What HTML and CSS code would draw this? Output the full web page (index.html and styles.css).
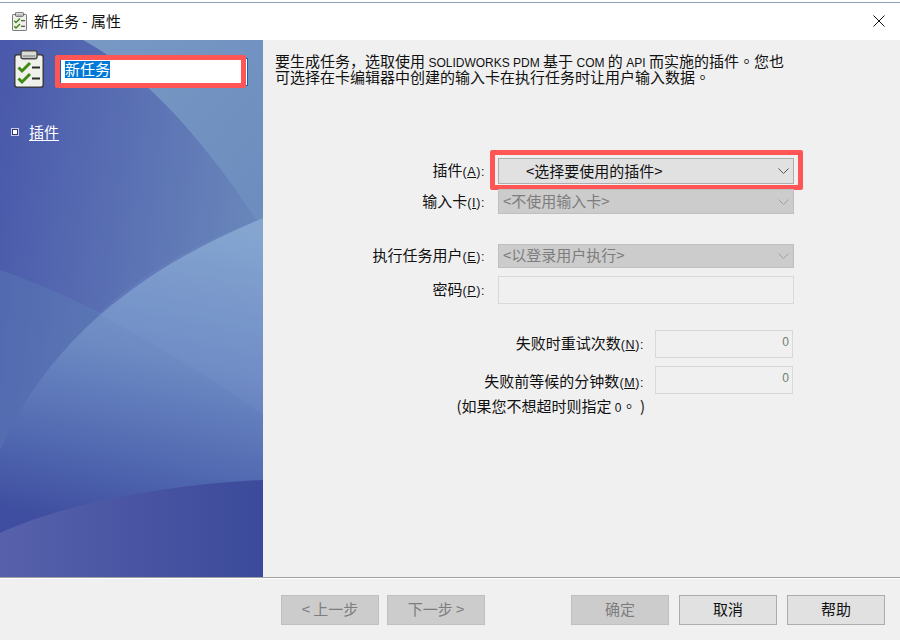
FILE: index.html
```html
<!DOCTYPE html>
<html lang="zh-CN">
<head>
<meta charset="utf-8">
<title>新任务 - 属性</title>
<link rel="stylesheet" href="styles.css">
</head>
<body>
<svg class="defs" width="0" height="0" aria-hidden="true">
  <defs>
    <symbol id="clip" viewBox="0 0 30 38">
      <rect x="0.75" y="4.75" width="28.5" height="32.5" rx="2.5" fill="#f1f1ec" stroke="#3c3c44" stroke-width="1.5"/>
      <rect x="7" y="0.75" width="16" height="8" rx="2" fill="#dcdcd8" stroke="#4a4a50" stroke-width="1.5"/>
      <rect x="8.5" y="5" width="13" height="2.5" fill="#a8a8a4"/>
      <path d="M4.5 17.5l3.5 3.5 8-8" fill="none" stroke="#3f8a12" stroke-width="3"/>
      <path d="M4.5 28.5l3.5 3.5 8-8" fill="none" stroke="#3f8a12" stroke-width="3"/>
      <path d="M18 17.5h8M18 28.5h8" fill="none" stroke="#2d2d2d" stroke-width="2.2"/>
    </symbol>
  </defs>
</svg>
<div class="window">
  <div class="desk-strip"></div>
  <header class="titlebar">
    <svg class="title-icon"><use href="#clip"/></svg>
    <span class="title-text">新任务 - 属性</span>
    <svg class="close" viewBox="0 0 12 12"><path d="M0.5 0.5l11 11M11.5 0.5l-11 11" stroke="#111" stroke-width="1" fill="none"/></svg>
  </header>
  <div class="content">
    <aside class="sidebar">
      <svg class="art" viewBox="0 0 263 537" preserveAspectRatio="none" aria-hidden="true">
        <defs>
          <linearGradient id="base" x1="0" y1="0.1" x2="1" y2="0.35">
            <stop offset="0" stop-color="#4a59ab"/>
            <stop offset="1" stop-color="#6a88bb"/>
          </linearGradient>
          <linearGradient id="arc" x1="0.75" y1="0" x2="0.6" y2="1">
            <stop offset="0" stop-color="#84a6cf"/>
            <stop offset="0.4" stop-color="#6d8ac3"/>
            <stop offset="0.7" stop-color="#5068b0"/>
            <stop offset="0.9" stop-color="#3f4ea0"/>
            <stop offset="1" stop-color="#3e4d9f"/>
          </linearGradient>
          <linearGradient id="low" x1="0" y1="0.6" x2="1" y2="0.6">
            <stop offset="0" stop-color="#5761ab"/>
            <stop offset="1" stop-color="#3c4a9b"/>
          </linearGradient>
          <linearGradient id="corner" x1="0" y1="0" x2="1" y2="1">
            <stop offset="0" stop-color="#7899c4"/>
            <stop offset="1" stop-color="#6c8cbe"/>
          </linearGradient>
        </defs>
        <rect width="263" height="537" fill="url(#base)"/>
        <path d="M83 0C135 28 195 85 263 190V0Z" fill="url(#corner)"/>
        <path d="M0 230C90 260 190 320 263 375V537H0Z" fill="#5f88b8" fill-opacity="0.3"/>
        <path d="M0 410C45 310 125 235 263 178V537H0Z" fill="url(#arc)"/>
        <path d="M98 274C170 312 220 345 263 375V178C190 205 140 235 98 274Z" fill="#8fa8e0" fill-opacity="0.12"/>
        <path d="M0 493C60 465 160 445 263 440V537H0Z" fill="url(#low)"/>
      </svg>
      <div class="side-head">
        <svg class="big-icon"><use href="#clip"/></svg>
        <div class="name-box"><span class="selected">新任务</span></div>
      </div>
      <nav class="side-nav">
        <span class="bullet"></span>
        <a class="side-link">插件</a>
      </nav>
    </aside>
    <main class="panel">
      <p class="intro">要生成任务，选取使用 <span class="latin">SOLIDWORKS PDM</span> 基于 <span class="latin">COM</span> 的 <span class="latin">API</span> 而实施的插件<span class="stop" lang="zh-TW">。</span>您也<br>可选择在卡编辑器中创建的输入卡在执行任务时让用户输入数据<span class="stop" lang="zh-TW">。</span></p>
      <div class="form">
        <div class="row row-plugin">
          <label class="label">插件<span class="key">(<u>A</u>):</span></label>
          <div class="combo combo-active">&lt;选择要使用的插件&gt;
            <svg class="chev" viewBox="0 0 11 6"><path d="M0.5 0.5l5 5 5-5" fill="none" stroke="#555" stroke-width="1"/></svg>
          </div>
        </div>
        <div class="row row-card">
          <label class="label">输入卡<span class="key">(<u>I</u>):</span></label>
          <div class="combo combo-off">&lt;不使用输入卡&gt;
            <svg class="chev" viewBox="0 0 11 6"><path d="M0.5 0.5l5 5 5-5" fill="none" stroke="#a0a0a0" stroke-width="1"/></svg>
          </div>
        </div>
        <div class="row row-user">
          <label class="label">执行任务用户<span class="key">(<u>E</u>):</span></label>
          <div class="combo combo-off">&lt;以登录用户执行&gt;
            <svg class="chev" viewBox="0 0 11 6"><path d="M0.5 0.5l5 5 5-5" fill="none" stroke="#a0a0a0" stroke-width="1"/></svg>
          </div>
        </div>
        <div class="row row-pass">
          <label class="label">密码<span class="key">(<u>P</u>):</span></label>
          <div class="field field-wide"></div>
        </div>
        <div class="row row-num row-retry">
          <label class="label">失败时重试次数<span class="key">(<u>N</u>):</span></label>
          <div class="field field-num">0</div>
        </div>
        <div class="row row-num row-wait">
          <label class="label">失败前等候的分钟数<span class="key">(<u>M</u>):</span></label>
          <div class="field field-num">0</div>
        </div>
        <div class="note">(如果您不想超时则指定 <span class="zero">0</span><span class="stop" lang="zh-TW">。</span> )</div>
      </div>
    </main>
  </div>
  <footer class="footer">
    <button class="btn btn-off" disabled>&lt; 上一步</button>
    <button class="btn btn-off" disabled>下一步 &gt;</button>
    <button class="btn btn-off btn-ok" disabled>确定</button>
    <button class="btn btn-cancel">取消</button>
    <button class="btn">帮助</button>
  </footer>
</div>
</body>
</html>
```
FILE: styles.css
```css
*, *::before, *::after { box-sizing: border-box; }
html, body { margin: 0; padding: 0; }
body {
  width: 900px;
  height: 640px;
  overflow: hidden;
  background: #f0f0f0;
  font-family: "Noto Sans CJK SC", "Liberation Sans", sans-serif;
  font-size: 15px;
  line-height: 16px;
  color: #111;
}
.defs { position: absolute; }
.window { width: 900px; height: 640px; display: flex; flex-direction: column; }
.desk-strip { height: 3px; background: #fff; border-bottom: 1px solid #8f9cb8; }
.titlebar {
  height: 37px;
  background: #fff;
  display: flex;
  align-items: center;
  padding: 0 15px 1px 12px;
}
.title-icon { width: 15px; height: 19px; }
.title-text { margin-left: 7px; font-size: 15px; flex: 1; }
.close { width: 12px; height: 12px; }

.content { height: 537px; display: flex; }
.sidebar { width: 263px; position: relative; color: #fff; }
.art { position: absolute; left: 0; top: 0; width: 263px; height: 537px; }
.side-head { position: relative; display: flex; align-items: flex-start; padding: 10px 0 0 14px; }
.big-icon { width: 30px; height: 38px; }
.name-box {
  position: relative;
  margin: 8px 0 0 16px;
  width: 188px;
  height: 28px;
  background: #fff;
  border: 1px solid #0a68c4;
  padding: 2px 0 0 4px;
}
.name-box::after {
  content: "";
  position: absolute;
  left: -6px;
  top: -4px;
  width: 191px;
  height: 33px;
  border: 5px solid #ff5555;
  border-radius: 2px;
}
.selected { display: inline-block; background: #0078d7; color: #fff; height: 17px; line-height: 16px; font-size: 15px; }
.side-nav { position: relative; display: flex; align-items: center; margin: 36px 0 0 12px; }
.bullet { width: 6px; height: 6px; background: #fff; border: 1px solid #30356e; outline: 1px solid #c6cbe8; outline-offset: 0; }
.side-link { margin-left: 11px; color: #fff; text-decoration: underline; text-underline-offset: 2px; font-size: 15px; }

.panel { flex: 1; padding: 13px 106px 0 12px; background: #f0f0f0; }
.intro { margin: 0; font-size: 15px; line-height: 16px; white-space: nowrap; }
.latin { font-family: "Liberation Sans", sans-serif; font-size: 12px; line-height: 0; }
.stop { font-family: "Noto Sans CJK TC", sans-serif; line-height: 0; }
.form { margin-top: 73px; display: flex; flex-direction: column; align-items: stretch; }
.row { display: flex; justify-content: flex-end; align-items: center; gap: 13px; }
.label { white-space: nowrap; font-size: 15px; padding-bottom: 2px; }
.key { font-family: "Liberation Sans", sans-serif; font-size: 12.5px; letter-spacing: 0.6px; line-height: 0; }
.combo {
  width: 296px;
  position: relative;
  display: flex;
  align-items: center;
  padding-left: 4px;
  font-size: 15px;
  border: 1px solid;
}
.combo-active { height: 26px; padding-left: 27px; background: #e1e1e1; border-color: #adadad; color: #111; }
.combo-active::after {
  content: "";
  position: absolute;
  left: -9px;
  top: -9px;
  width: 313px;
  height: 40px;
  border: 5px solid #ff5555;
  border-radius: 2px;
}
.combo-off { background: #cccccc; border-color: #bfbfbf; color: #7d7d7d; padding-bottom: 2px; }
.chev { position: absolute; right: 4px; top: 50%; margin-top: -3px; width: 11px; height: 6px; }
.row-plugin { height: 26px; }
.row-card { margin-top: 5px; height: 25px; }
.row-card .combo { height: 25px; }
.row-user { margin-top: 30px; height: 24px; }
.row-user .combo { height: 24px; }
.row-pass { margin-top: 8px; height: 28px; }
.field { height: 28px; background: #f0f0f0; border: 1px solid #d9d9d9; }
.field-wide { width: 296px; }
.row-num { height: 28px; gap: 11px; padding-right: 1px; }
.row-retry { margin-top: 26px; }
.row-wait { margin-top: 8px; }
.row-wait .label { position: relative; top: 2px; }
.field-num {
  width: 138px;
  text-align: right;
  padding: 3px 3px 0 0;
  font-family: "Liberation Sans", sans-serif;
  font-size: 12px;
  line-height: 16px;
  color: #6f7f6f;
}
.note { margin-top: 4px; padding-right: 149px; text-align: right; font-size: 15px; }
.zero { font-family: "Liberation Sans", sans-serif; font-size: 12px; line-height: 0; }

.footer {
  height: 63px;
  border-top: 1px solid #a0a0a0;
  display: flex;
  align-items: flex-start;
  padding: 17px 15px 0 281px;
  gap: 8px;
  box-shadow: inset 0 1px 0 #fff;
}
.btn {
  width: 98px;
  height: 30px;
  padding: 0 0 2px;
  font-family: inherit;
  font-size: 15px;
  line-height: 16px;
  background: #e1e1e1;
  border: 1px solid #adadad;
  color: #111;
}
.btn-off { background: #cccccc; border-color: #bfbfbf; color: #7d7d7d; }
.btn-ok { margin-left: 78px; margin-right: 2px; }
.btn-cancel { margin-right: 2px; }
```
